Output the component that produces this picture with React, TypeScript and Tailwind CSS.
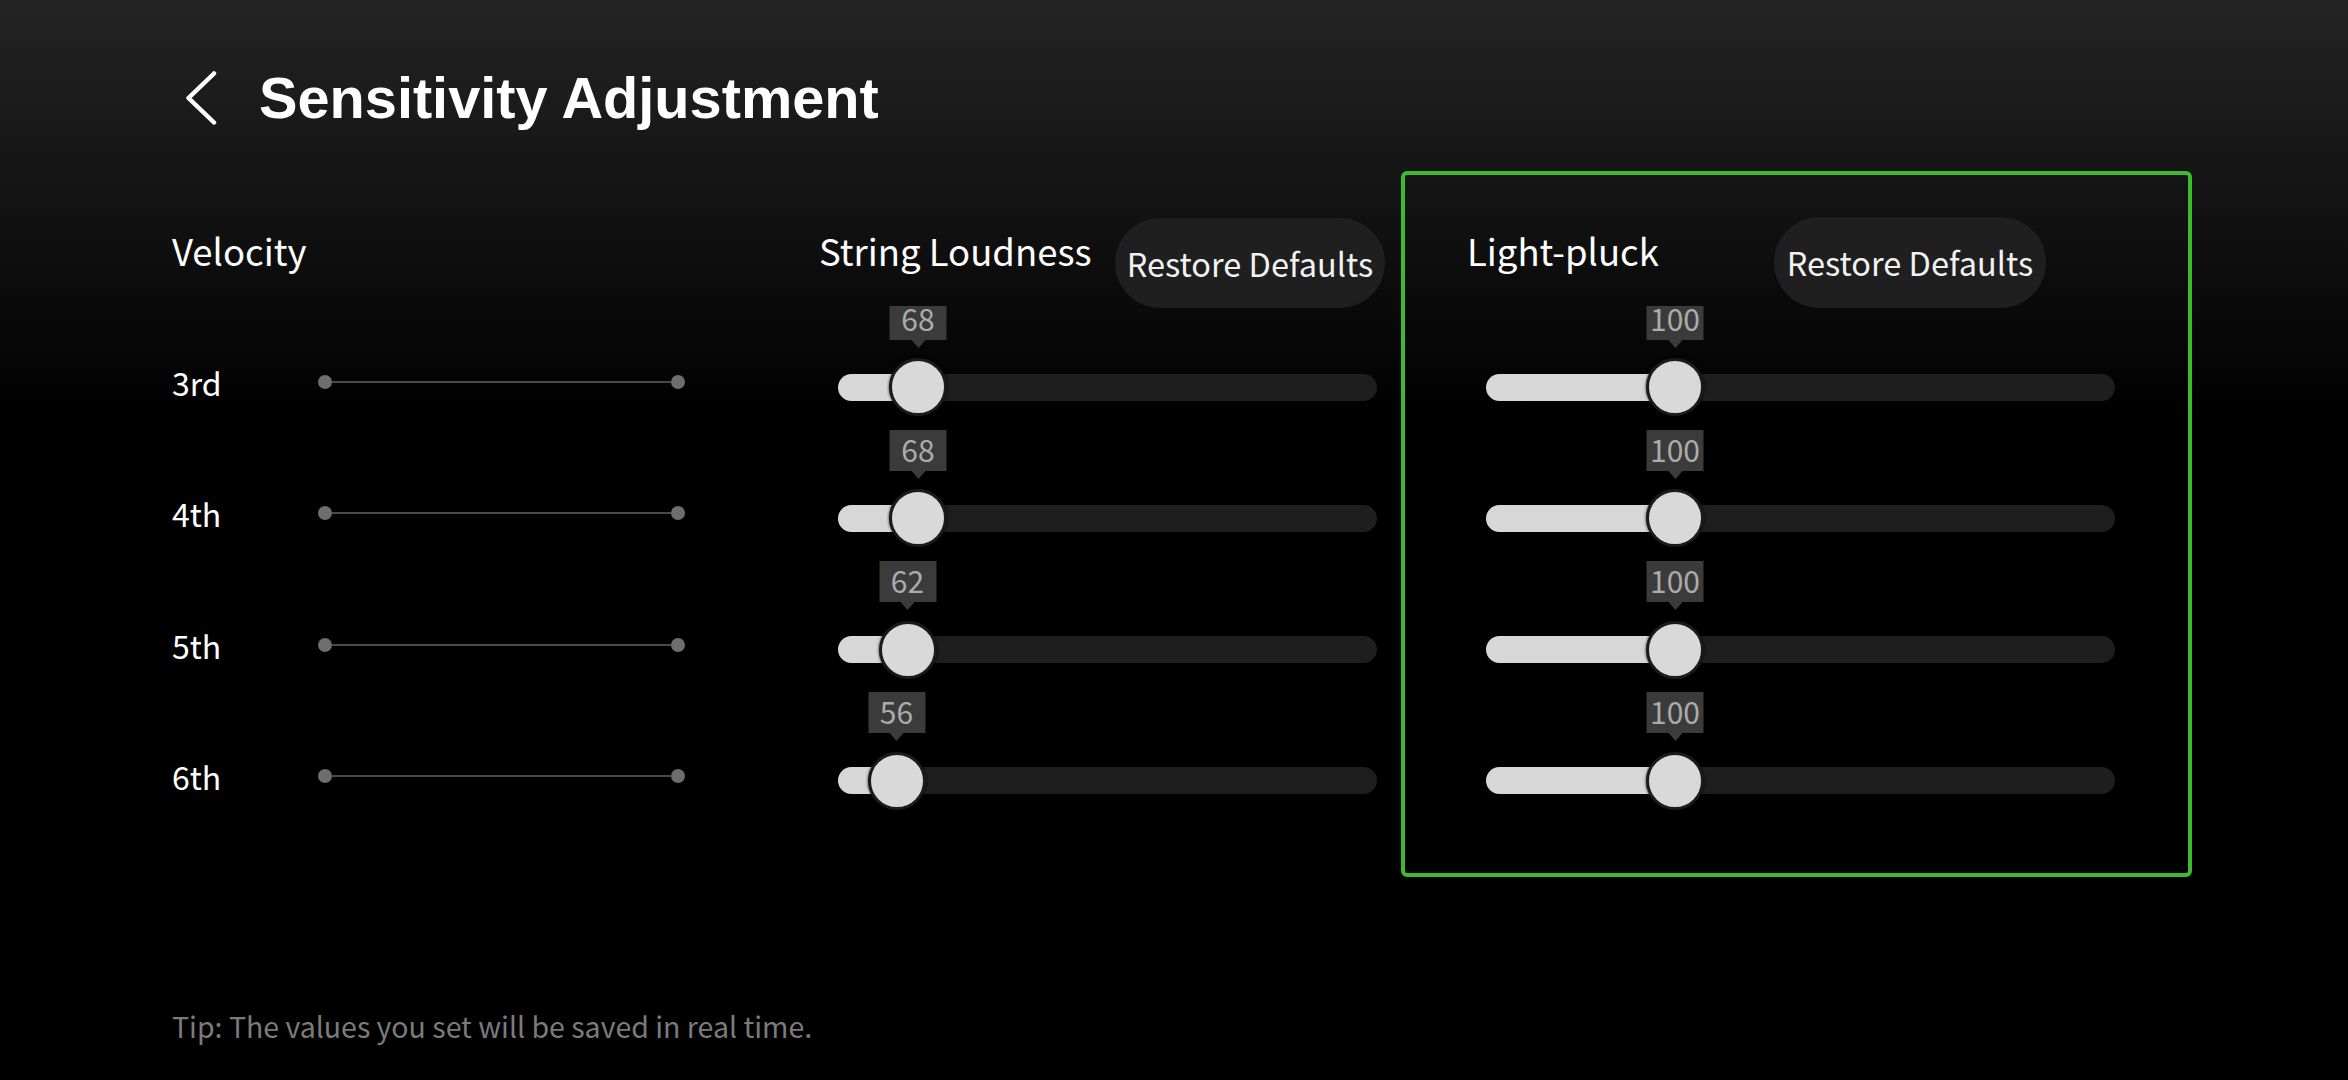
import React from "react";

type SliderRow = { value: number; x: number };

const loudness: SliderRow[] = [
  { value: 68, x: 80 },
  { value: 68, x: 80 },
  { value: 62, x: 69.5 },
  { value: 56, x: 58.5 },
];

const pluck: SliderRow[] = [
  { value: 100, x: 189 },
  { value: 100, x: 189 },
  { value: 100, x: 189 },
  { value: 100, x: 189 },
];

function Slider({ row, trackClass }: { row: SliderRow; trackClass: string }) {
  return (
    <div className="h-[131.3px] pt-[67.5px]">
      <div className={"relative h-[27px] rounded-full bg-[#1e1e1e] " + trackClass}>
        <div
          className="absolute left-0 top-0 h-full rounded-l-full bg-[#d7d7d7]"
          style={{ width: row.x }}
        />
        <div
          className="absolute top-1/2 h-[58px] w-[58px] -translate-x-1/2 -translate-y-1/2 rounded-full border-[3px] border-[#1b1b1b] bg-[#d9d9d9] shadow-[0_0_3px_rgba(0,0,0,0.9)]"
          style={{ left: row.x }}
        />
        <div
          className="absolute top-[-75px] flex h-[41px] w-[57px] -translate-x-1/2 items-center justify-center bg-[#3b3b3b] pb-[3px] text-[30px] leading-none text-[#ababab]"
          style={{ left: row.x }}
        >
          {row.value}
          <span className="absolute left-1/2 top-full h-0 w-0 -translate-x-1/2 border-x-[7px] border-t-[8px] border-x-transparent border-t-[#3b3b3b]" />
        </div>
      </div>
    </div>
  );
}

export default function App() {
  return (
    <div className="h-[1080px] w-full overflow-hidden bg-black bg-[linear-gradient(180deg,#242424_0px,#000_420px)] font-['Noto_Sans_CJK_SC','Noto_Sans',sans-serif] text-white">
      <header className="flex h-[171px] items-start pl-[186px] pt-[71px]">
        <svg
          className="h-[54px] w-[31px] shrink-0"
          viewBox="0 0 31 54"
          fill="none"
          stroke="#ffffff"
          strokeWidth="4.5"
          strokeLinecap="round"
          strokeLinejoin="round"
        >
          <polyline points="28,2.5 2.5,27 28,51.5" />
        </svg>
        <h1 className="ml-[42px] mt-[-1px] font-['Liberation_Sans',Arial,sans-serif] text-[57.7px] font-bold leading-none">
          Sensitivity Adjustment
        </h1>
      </header>

      <div className="flex items-start pl-[172px]">
        <section className="w-[647px] shrink-0">
          <div className="h-[135px] pt-[62px]">
            <h2 className="text-[36.5px] font-normal leading-none">Velocity</h2>
          </div>
          <div>
            {["3rd", "4th", "5th", "6th"].map((label) => (
              <div key={label} className="h-[131.3px] pt-[40px]">
                <div className="flex h-[72px] items-center">
                  <span className="w-[146px] text-[32px] leading-[72px]">{label}</span>
                  <div className="flex w-[367px] items-center">
                    <span className="h-[14px] w-[14px] shrink-0 rounded-full bg-[#6e6e6e]" />
                    <span className="h-[2px] flex-1 bg-[#4a4a4a]" />
                    <span className="h-[14px] w-[14px] shrink-0 rounded-full bg-[#6e6e6e]" />
                  </div>
                </div>
              </div>
            ))}
          </div>
        </section>

        <section className="w-[566px] shrink-0">
          <div className="flex h-[135px] items-start">
            <h2 className="mt-[62px] whitespace-nowrap text-[36.5px] font-normal leading-none">String Loudness</h2>
            <button className="ml-auto mt-[47px] h-[90px] w-[270px] shrink-0 whitespace-nowrap rounded-full bg-[#1f1f1f] text-[32.5px] leading-none text-[#f2f2f2]">
              Restore Defaults
            </button>
          </div>
          <div className="overflow-hidden pl-[19px]">
            {loudness.map((row, i) => (
              <Slider key={i} row={row} trackClass="w-[539px]" />
            ))}
          </div>
        </section>

        <section className="ml-[16px] w-[791px] shrink-0 rounded-[6px] border-4 border-[#3dbb2f] pb-[42px]">
          <div className="flex h-[131px] items-start pl-[62px]">
            <h2 className="mt-[58px] whitespace-nowrap text-[36.5px] font-normal leading-none">Light-pluck</h2>
            <button className="ml-auto mr-[142px] mt-[42px] h-[91px] w-[272px] shrink-0 whitespace-nowrap rounded-full bg-[#1f1f1f] text-[32.5px] leading-none text-[#f2f2f2]">
              Restore Defaults
            </button>
          </div>
          <div className="overflow-hidden pl-[81px]">
            {pluck.map((row, i) => (
              <Slider key={i} row={row} trackClass="w-[629px]" />
            ))}
          </div>
        </section>
      </div>

      <p className="mt-[135px] pl-[172px] text-[28.5px] leading-none text-[#7b7b7b]">
        Tip: The values you set will be saved in real time.
      </p>
    </div>
  );
}
